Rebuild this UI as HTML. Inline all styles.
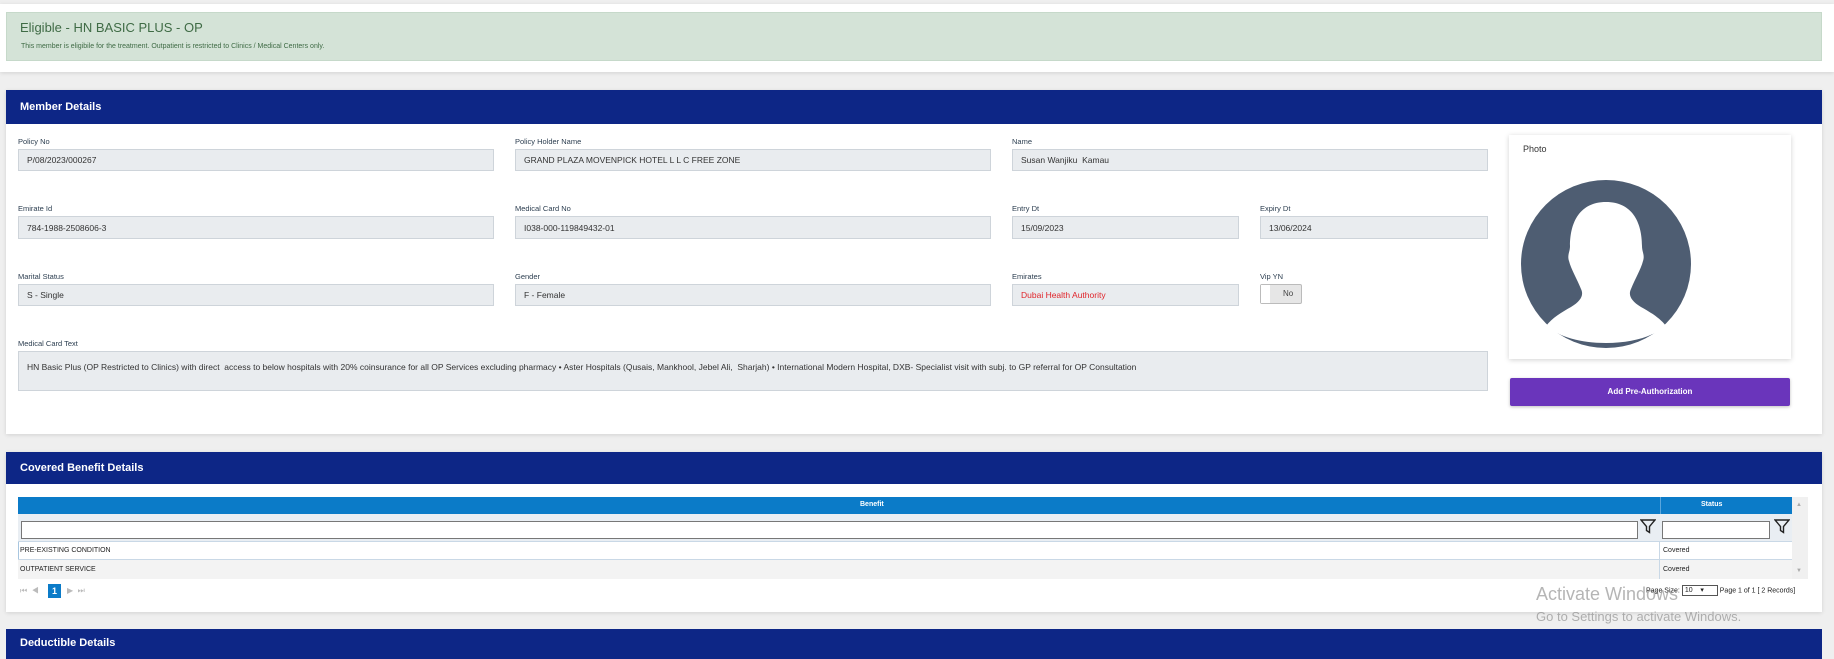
<!DOCTYPE html>
<html><head><meta charset="utf-8"><style>
*{box-sizing:border-box;margin:0;padding:0}
body{width:1834px;height:654px;overflow:hidden;background:#efefef;font-family:"Liberation Sans",sans-serif;position:relative}
.a{position:absolute}
.card{position:absolute;background:#fff;box-shadow:0 1px 4px rgba(0,0,0,.12)}
.hdr{position:absolute;background:#0d2686;color:#fff;font-size:11px;font-weight:bold;padding-left:14px}
.lbl{position:absolute;font-size:7.5px;color:#2c3e50}
.inp{position:absolute;background:#e9ecef;border:1px solid #ced4da;font-size:8.5px;color:#333;padding-left:8px;display:flex;align-items:center}
.t{position:absolute;font-size:8px;color:#222}
</style></head><body>
<div class="card" style="left:0;top:4px;width:1834px;height:68px"></div>
<div class="a" style="left:6px;top:12px;width:1816px;height:49px;background:#d4e3d7;border:1px solid #c6d9ca"></div>
<div class="a" style="left:20px;top:20px;font-size:13px;color:#3f6b45">Eligible - HN BASIC PLUS - OP</div>
<div class="a" style="left:21px;top:43px;font-size:7px;color:#3f6b45">This member is eligibile for the treatment. Outpatient is restricted to Clinics / Medical Centers only.</div>

<div class="card" style="left:6px;top:90px;width:1816px;height:344px"></div>
<div class="hdr" style="left:6px;top:90px;width:1816px;height:34px;line-height:34px">Member Details</div>

<div class="lbl" style="left:18px;top:137px">Policy No</div>
<div class="inp" style="left:18px;top:149px;width:476px;height:22px">P/08/2023/000267</div>
<div class="lbl" style="left:515px;top:137px">Policy Holder Name</div>
<div class="inp" style="left:515px;top:149px;width:476px;height:22px">GRAND PLAZA MOVENPICK HOTEL L L C FREE ZONE</div>
<div class="lbl" style="left:1012px;top:137px">Name</div>
<div class="inp" style="left:1012px;top:149px;width:476px;height:22px">Susan Wanjiku&nbsp; Kamau</div>

<div class="lbl" style="left:18px;top:204px">Emirate Id</div>
<div class="inp" style="left:18px;top:216px;width:476px;height:23px">784-1988-2508606-3</div>
<div class="lbl" style="left:515px;top:204px">Medical Card No</div>
<div class="inp" style="left:515px;top:216px;width:476px;height:23px">I038-000-119849432-01</div>
<div class="lbl" style="left:1012px;top:204px">Entry Dt</div>
<div class="inp" style="left:1012px;top:216px;width:227px;height:23px">15/09/2023</div>
<div class="lbl" style="left:1260px;top:204px">Expiry Dt</div>
<div class="inp" style="left:1260px;top:216px;width:228px;height:23px">13/06/2024</div>

<div class="lbl" style="left:18px;top:272px">Marital Status</div>
<div class="inp" style="left:18px;top:284px;width:476px;height:22px">S - Single</div>
<div class="lbl" style="left:515px;top:272px">Gender</div>
<div class="inp" style="left:515px;top:284px;width:476px;height:22px">F - Female</div>
<div class="lbl" style="left:1012px;top:272px">Emirates</div>
<div class="inp" style="left:1012px;top:284px;width:227px;height:22px;color:#e0242a">Dubai Health Authority</div>
<div class="lbl" style="left:1260px;top:272px">Vip YN</div>
<div class="a" style="left:1260px;top:284px;width:42px;height:20px;border:1px solid #bbb;background:#e6e6e6;border-radius:2px"><div style="position:absolute;left:0;top:0;width:9px;height:18px;background:#fff"></div><span style="position:absolute;left:22px;top:4px;font-size:8px;color:#444">No</span></div>

<div class="lbl" style="left:18px;top:339px">Medical Card Text</div>
<div class="inp" style="left:18px;top:351px;width:1470px;height:40px;align-items:flex-start;padding-top:10px">HN Basic Plus (OP Restricted to Clinics) with direct&nbsp; access to below hospitals with 20% coinsurance for all OP Services excluding pharmacy • Aster Hospitals (Qusais, Mankhool, Jebel Ali,&nbsp; Sharjah) • International Modern Hospital, DXB- Specialist visit with subj. to GP referral for OP Consultation</div>

<div class="card" style="left:1509px;top:135px;width:282px;height:224px;box-shadow:0 1px 5px rgba(0,0,0,.18)"></div>
<div class="a" style="left:1523px;top:144px;font-size:9px;color:#333">Photo</div>
<svg class="a" style="left:1520px;top:178px" width="172" height="172" viewBox="0 0 172 172">
<ellipse cx="86" cy="86" rx="85" ry="84" fill="#4e5d72"/>
<path d="M86 24c-26 0-36 20-36 44 0 6-3 9-1 15 2 8 8 18 12 28 3 6 0 12-10 18-9 5-19 11-25 19 14 11 34 17 60 17s46-6 60-17c-6-8-16-14-25-19-10-6-13-12-10-18 4-10 10-20 12-28 2-6-1-9-1-15 0-24-10-44-36-44z" fill="#fff"/>
</svg>
<div class="a" style="left:1510px;top:378px;width:280px;height:28px;background:#6a35bb;color:#fff;font-size:8px;font-weight:bold;text-align:center;line-height:28px;border-radius:2px;box-shadow:0 1px 3px rgba(0,0,0,.25)">Add Pre-Authorization</div>

<div class="card" style="left:6px;top:452px;width:1816px;height:160px"></div>
<div class="hdr" style="left:6px;top:452px;width:1816px;height:32px;line-height:32px">Covered Benefit Details</div>
<div class="a" style="left:18px;top:497px;width:1790px;height:82px;border:1px solid #a8c6e0;background:#fff"></div>
<div class="a" style="left:18px;top:497px;width:1774px;height:17px;background:#0b7bc8;color:#fff;font-size:7px;font-weight:bold">
<span style="position:absolute;left:842px;top:4px">Benefit</span><span style="position:absolute;left:1642px;top:0;width:1px;height:17px;background:#5aa6dd"></span><span style="position:absolute;left:1683px;top:4px">Status</span></div>
<div class="a" style="left:18px;top:514px;width:1774px;height:28px;background:#e9eef3;border-bottom:1px solid #c9d8e6"></div>
<div class="a" style="left:21px;top:521px;width:1617px;height:18px;background:#fff;border:1px solid #777"></div>
<svg class="a" style="left:1640px;top:519px" width="16" height="15" viewBox="0 0 16 15"><path d="M1 1h14l-5.5 6.5v6l-3-2v-4z" fill="none" stroke="#222" stroke-width="1.4"/></svg>
<div class="a" style="left:1662px;top:521px;width:108px;height:18px;background:#fff;border:1px solid #777"></div>
<svg class="a" style="left:1774px;top:519px" width="16" height="15" viewBox="0 0 16 15"><path d="M1 1h14l-5.5 6.5v6l-3-2v-4z" fill="none" stroke="#222" stroke-width="1.4"/></svg>
<div class="a" style="left:18px;top:542px;width:1774px;height:18px;border-bottom:1px solid #c9d8e6"></div>
<div class="a" style="left:18px;top:560px;width:1774px;height:19px;background:#f3f3f3"></div>
<div class="a" style="left:1659px;top:542px;width:1px;height:37px;background:#c9d8e6"></div>
<div class="t" style="left:20px;top:547px;font-size:7px">PRE-EXISTING CONDITION</div>
<div class="t" style="left:20px;top:566px;font-size:7px">OUTPATIENT SERVICE</div>
<div class="t" style="left:1663px;top:547px;font-size:7px">Covered</div>
<div class="t" style="left:1663px;top:566px;font-size:7px">Covered</div>
<div class="a" style="left:1792px;top:497px;width:16px;height:82px;background:#f0f0f0"></div>
<div class="a" style="left:1796px;top:502px;font-size:6px;color:#aaa">▲</div>
<div class="a" style="left:1796px;top:568px;font-size:6px;color:#aaa">▼</div>
<div class="a" style="left:20px;top:586px;font-size:8px;color:#bbb">⏮ &nbsp;◀</div>
<div class="a" style="left:48px;top:584px;width:13px;height:14px;background:#0b7bc8;color:#fff;font-size:9px;font-weight:bold;text-align:center;line-height:14px">1</div>
<div class="a" style="left:67px;top:586px;font-size:8px;color:#bbb">▶ &nbsp;⏭</div>
<div class="a" style="left:1646px;top:585px;font-size:7px;color:#222">Page Size: <span style="display:inline-block;width:36px;height:11px;border:1px solid #555;vertical-align:middle;font-size:7px;padding-left:2px">10 &nbsp; &nbsp;▾</span> Page 1 of 1 [ 2 Records]</div>
<div class="a" style="left:1536px;top:584px;font-size:18px;color:rgba(120,120,120,.55)">Activate Windows</div>
<div class="a" style="left:1536px;top:609px;font-size:13px;color:rgba(120,120,120,.55)">Go to Settings to activate Windows.</div>

<div class="hdr" style="left:6px;top:629px;width:1816px;height:30px;line-height:28px">Deductible Details</div>
</body></html>
